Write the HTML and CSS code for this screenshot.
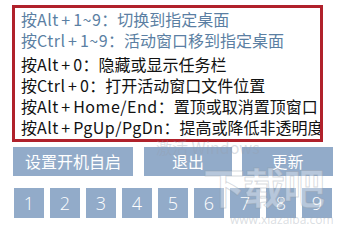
FILE: index.html
```html
<!DOCTYPE html>
<html lang="zh-CN">
<head>
<meta charset="utf-8">
<title>快捷键</title>
<link rel="stylesheet" href="styles.css">
</head>
<body>
<div class="page">
  <div class="help">
    <div class="group blue">
      <div class="line">按<span class="k">Alt<span class="p">+</span>1~9</span>：切换到指定桌面</div>
      <div class="line">按<span class="k">Ctrl<span class="p">+</span>1~9</span>：活动窗口移到指定桌面</div>
    </div>
    <div class="group">
      <div class="line">按<span class="k">Alt<span class="p">+</span>0</span>：隐藏或显示任务栏</div>
      <div class="line">按<span class="k">Ctrl<span class="p">+</span>0</span>：打开活动窗口文件位置</div>
      <div class="line">按<span class="k">Alt<span class="p">+</span>Home/End</span>：置顶或取消置顶窗口</div>
      <div class="line">按<span class="k">Alt<span class="p">+</span>PgUp/PgDn</span>：提高或降低非透明度</div>
    </div>
  </div>
  <div class="actions">
    <div class="btn w1">设置开机自启</div>
    <div class="btn w2">退出</div>
    <div class="btn w3">更新</div>
  </div>
  <div class="desks">
    <div class="num">1</div>
    <div class="num">2</div>
    <div class="num">3</div>
    <div class="num">4</div>
    <div class="num">5</div>
    <div class="num">6</div>
    <div class="num">7</div>
    <div class="num">8</div>
    <div class="num">9</div>
  </div>
  <div class="activate">激活 Windows</div>
  <div class="logo">下载吧</div>
  <div class="site">www.xiazaiba.com</div>
</div>
</body>
</html>
```
FILE: styles.css
```css
html, body {
  margin: 0;
  padding: 0;
  background: #ffffff;
}
.page {
  position: relative;
  width: 340px;
  height: 230px;
  overflow: hidden;
  padding: 5px 0 0 12px;
  box-sizing: border-box;
  font-family: "Noto Sans CJK SC", "Noto Sans", sans-serif;
}
.help {
  width: 311px;
  box-sizing: border-box;
  border: 3px solid #b0212b;
  padding: 1px 0 1px 6px;
  display: flex;
  flex-direction: column;
  gap: 3px;
  overflow: hidden;
}
.line {
  font-size: 16px;
  line-height: 21px;
  height: 21px;
  white-space: nowrap;
  color: #111111;
}
.blue .line {
  color: #5b7fa3;
}
.k {
  letter-spacing: 0.5px;
}
.p {
  margin: 0 2.5px;
}
.actions {
  display: flex;
  margin: 5px 0 0 1px;
  gap: 11px;
}
.btn {
  height: 29px;
  background: #92abc9;
  color: #ffffff;
  font-size: 16px;
  line-height: 29px;
  text-align: center;
}
.w1 { width: 120px; }
.w2 { width: 88px; margin-right: -1px; }
.w3 { width: 91px; }
.desks {
  display: flex;
  gap: 6px;
  margin: 12px 0 0 2px;
}
.num {
  width: 30px;
  height: 30px;
  background: #92abc9;
  color: #ffffff;
  font-family: "Open Sans", "Noto Sans", sans-serif;
  font-weight: 300;
  font-size: 18px;
  line-height: 30px;
  text-align: center;
}
.activate {
  position: absolute;
  left: 156px;
  top: 135px;
  font-size: 16px;
  color: rgba(150, 160, 175, 0.35);
  white-space: nowrap;
}
.logo {
  position: absolute;
  left: 203px;
  top: 158px;
  font-size: 42px;
  line-height: 56px;
  letter-spacing: -2px;
  font-weight: 700;
  color: rgba(255, 255, 255, 0.35);
  -webkit-text-stroke: 1px rgba(140, 150, 160, 0.35);
  white-space: nowrap;
}
.site {
  position: absolute;
  left: 230px;
  top: 212px;
  font-family: "Open Sans", sans-serif;
  font-size: 12px;
  line-height: 16px;
  color: rgba(160, 170, 180, 0.4);
  white-space: nowrap;
}
```
